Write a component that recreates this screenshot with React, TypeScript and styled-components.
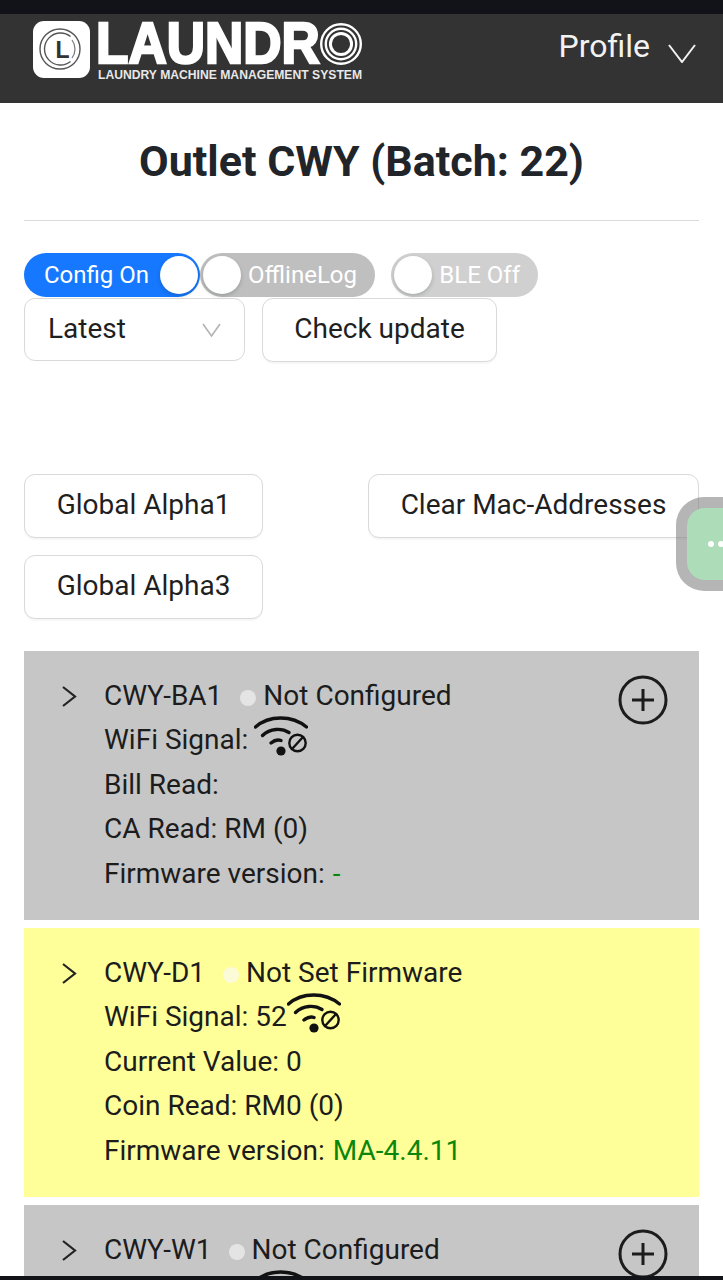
import styled, { createGlobalStyle } from "styled-components";

const GlobalStyle = createGlobalStyle`
  html, body {
    margin: 0;
    padding: 0;
    height: 1280px;
    overflow: hidden;
    background: #fff;
    font-family: Roboto, "Liberation Sans", sans-serif;
    color: #212529;
  }
  * { box-sizing: border-box; }
`;

const Page = styled.div`
  position: relative;
  width: 723px;
  height: 1280px;
  overflow: hidden;
`;

const StatusBar = styled.div`
  height: 14px;
  background: #111318;
`;

const Header = styled.header`
  height: 89px;
  background: #333333;
  display: flex;
  justify-content: space-between;
  padding: 7px 27px 0 32px;
`;

const Logo = styled.div`
  display: flex;
  gap: 8px;
  height: 58px;
`;

const LogoWords = styled.div`
  display: flex;
  flex-direction: column;
  width: 264px;
`;

const LogoTop = styled.div`
  display: flex;
  align-items: center;
  height: 43px;
  margin-top: 1px;
`;

const LogoName = styled.span`
  display: block;
  width: 222px;
  font-family: "Liberation Sans", sans-serif;
  font-weight: 700;
  font-size: 57px;
  line-height: 43px;
  color: #fff;
  -webkit-text-stroke: 2.5px #fff;
  transform: translateX(-2px) scaleX(0.93);
  transform-origin: left;
  white-space: nowrap;
`;

const LogoTag = styled.span`
  display: block;
  height: 13px;
  margin-top: 3px;
  font-family: "Liberation Sans", sans-serif;
  font-weight: 700;
  font-size: 13px;
  line-height: 13px;
  white-space: nowrap;
  color: #e8e8e8;
  transform: scaleX(0.935);
  transform-origin: left;
`;

const ProfileMenu = styled.div`
  display: flex;
  align-items: flex-start;
  gap: 18px;
  color: #f2f2f2;
  font-size: 32px;
  line-height: 36px;
  padding-top: 7px;
  svg { margin-top: 16px; }
`;

const Content = styled.main`
  padding: 0 24px;
`;

const Title = styled.h1`
  margin: 0;
  height: 118px;
  border-bottom: 1px solid #d9d9d9;
  padding-top: 32px;
  text-align: center;
  font-size: 43px;
  line-height: 52px;
  font-weight: 700;
  color: #212529;
  white-space: nowrap;
`;

const SwitchRow = styled.div`
  display: flex;
  margin-top: 32px;
  height: 44px;
`;

const Switch = styled.div<{ $on?: boolean; $bg: string; $w: number; $gap?: number }>`
  display: flex;
  flex-direction: ${(p) => (p.$on ? "row-reverse" : "row")};
  justify-content: space-between;
  align-items: center;
  width: ${(p) => p.$w}px;
  height: 44px;
  margin-left: ${(p) => p.$gap ?? 0}px;
  padding: 0 ${(p) => (p.$on ? 2 : 18)}px 0 ${(p) => (p.$on ? 20 : 3)}px;
  border-radius: 22px;
  background: ${(p) => p.$bg};
  color: #fff;
  font-size: 24px;
  white-space: nowrap;
`;

const Handle = styled.span`
  flex: none;
  width: 38px;
  height: 38px;
  border-radius: 50%;
  background: #fff;
  box-shadow: 0 2px 4px rgba(0, 35, 11, 0.2);
`;

const ControlRow = styled.div`
  display: flex;
  gap: 17px;
  margin-top: 1px;
`;

const Select = styled.div`
  width: 221px;
  height: 63px;
  display: flex;
  align-items: center;
  justify-content: space-between;
  padding: 0 23px 2px 23px;
  border: 1.5px solid #d9d9d9;
  border-radius: 11px;
  font-size: 28px;
  color: #1f1f1f;
  svg { margin-top: 2px; }
`;

const Button = styled.div<{ $w: number }>`
  width: ${(p) => p.$w}px;
  height: 64px;
  display: flex;
  align-items: center;
  justify-content: center;
  padding-bottom: 3px;
  border: 1.5px solid #d9d9d9;
  border-radius: 11px;
  box-shadow: 0 2px 0 rgba(0, 0, 0, 0.03);
  background: #fff;
  font-size: 28px;
  color: #1f1f1f;
  white-space: nowrap;
`;

const GlobalActions = styled.div`
  display: grid;
  grid-template-columns: 239px 331px;
  justify-content: space-between;
  gap: 17px 0;
  margin-top: 112px;
`;

const Cards = styled.div`
  display: flex;
  flex-direction: column;
  gap: 8px;
  margin-top: 32px;
`;

const Card = styled.section<{ $bg: string }>`
  position: relative;
  height: 269px;
  flex: none;
  padding: 23px 0 0 38px;
  background: ${(p) => p.$bg};
  display: flex;
  gap: 10px;
  font-size: 28px;
  line-height: 44.4px;
  color: #1c1c1c;
`;

const Expand = styled.div`
  width: 33px;
  height: 44px;
  margin-right: -1px;
  display: flex;
  align-items: center;
`;

const Lines = styled.div`
  display: flex;
  flex-direction: column;
`;

const Line = styled.div`
  display: flex;
  align-items: center;
  height: 44.4px;
  white-space: nowrap;
`;

const Dot = styled.span<{ $bg: string; $l: number; $r: number }>`
  width: 16px;
  height: 16px;
  border-radius: 50%;
  margin: 3px ${(p) => p.$r}px 0 ${(p) => p.$l}px;
  background: ${(p) => p.$bg};
`;

const Version = styled.span`
  color: #0a860a;
  margin-left: 8px;
`;

const AddButton = styled.svg`
  position: absolute;
  top: 24px;
  right: 31px;
`;

const WifiIcon = styled.svg<{ $shift: number }>`
  flex: none;
  margin: -10px 0 0 ${(p) => p.$shift}px;
`;

const FloatingBubble = styled.div`
  position: absolute;
  left: 676px;
  top: 497px;
  width: 90px;
  height: 94px;
  padding: 11px;
  border-radius: 28px;
  background: rgba(120, 120, 120, 0.55);
`;

const BubbleInner = styled.div`
  width: 100%;
  height: 100%;
  display: flex;
  align-items: center;
  gap: 4px;
  padding: 0 0 0 21px;
  border-radius: 18px;
  background: #acdcb8;
`;

const BubbleDot = styled.span`
  width: 6px;
  height: 6px;
  border-radius: 50%;
  background: #fff;
`;

const BottomBar = styled.div`
  position: absolute;
  left: 0;
  right: 0;
  bottom: 0;
  height: 4px;
  background: #111318;
`;

function LogoBadge() {
  return (
    <svg width="58" height="58" viewBox="0 0 58 58">
      <rect x="1" y="0" width="57" height="57" rx="11" fill="#fff" />
      <circle cx="28" cy="28" r="20" fill="none" stroke="#555" strokeWidth="1.4" />
      <path d="M38.5 15.5A16 16 0 1 0 38.5 40.5" fill="none" stroke="#555" strokeWidth="1.4" />
      <path d="M40 19a15 15 0 0 1 0 18" fill="none" stroke="#777" strokeWidth="1.2" />
      <text x="23.5" y="37" fontFamily="Liberation Sans" fontWeight="700" fontSize="23" fill="#333">L</text>
    </svg>
  );
}

function LogoRing() {
  return (
    <svg width="42" height="42" viewBox="0 0 42 42" style={{ flex: "none" }}>
      <circle cx="21" cy="21" r="19.8" fill="none" stroke="#fff" strokeWidth="2.4" />
      <circle cx="21" cy="21" r="15.2" fill="none" stroke="#fff" strokeWidth="2.4" />
      <circle cx="21" cy="21" r="10.6" fill="none" stroke="#fff" strokeWidth="3" />
    </svg>
  );
}

function Chevron({ w, h, color, weight }: { w: number; h: number; color: string; weight: number }) {
  return (
    <svg width={w} height={h} viewBox={`0 0 ${w} ${h}`} fill="none" stroke={color} strokeWidth={weight} style={{ flex: "none" }}>
      <path d={`M1 1L${w / 2} ${h - 1}L${w - 1} 1`} />
    </svg>
  );
}

function CardArrow() {
  return (
    <svg width="15" height="21" viewBox="0 0 15 21" fill="none" stroke="#222" strokeWidth="2.2">
      <path d="M1 1l12 9.5L1 20" />
    </svg>
  );
}

function Wifi({ shift }: { shift: number }) {
  return (
    <WifiIcon $shift={shift} width="54" height="40" viewBox="0 0 54 40" fill="none" stroke="#111" strokeLinecap="round">
      <path d="M1.5 11C15 -1 38 -1 52.5 11" strokeWidth="3.4" />
      <path d="M8.5 19.5C16 12 28 12 35 16.5" strokeWidth="3.4" />
      <path d="M17 27c3-2.5 7-3.5 10-2.5" strokeWidth="3.4" />
      <circle cx="27" cy="35" r="4.6" fill="#111" stroke="none" />
      <circle cx="43.5" cy="27" r="8.2" strokeWidth="2.4" />
      <path d="M38 33l11-12" strokeWidth="2.4" />
    </WifiIcon>
  );
}

function Plus() {
  return (
    <AddButton width="50" height="50" viewBox="0 0 50 50" fill="none" stroke="#1c1c1c" strokeWidth="3">
      <circle cx="25" cy="25" r="23" />
      <path d="M25 14v22M14 25h22" />
    </AddButton>
  );
}

export default function App() {
  return (
    <Page>
      <GlobalStyle />
      <StatusBar />
      <Header>
        <Logo>
          <LogoBadge />
          <LogoWords>
            <LogoTop>
              <LogoName>LAUNDR</LogoName>
              <LogoRing />
            </LogoTop>
            <LogoTag>LAUNDRY MACHINE MANAGEMENT SYSTEM</LogoTag>
          </LogoWords>
        </Logo>
        <ProfileMenu>
          Profile
          <Chevron w={28} h={19} color="#f2f2f2" weight={2} />
        </ProfileMenu>
      </Header>
      <Content>
        <Title>Outlet CWY (Batch: 22)</Title>
        <SwitchRow>
          <Switch $on $bg="#1677ff" $w={176}>
            <Handle />
            Config On
          </Switch>
          <Switch $bg="#bfbfbf" $w={175}>
            <Handle />
            OfflineLog
          </Switch>
          <Switch $bg="#d0d0d0" $w={147} $gap={16}>
            <Handle />
            BLE Off
          </Switch>
        </SwitchRow>
        <ControlRow>
          <Select>
            Latest
            <Chevron w={19} h={14} color="#b3b3b3" weight={1.6} />
          </Select>
          <Button $w={235}>Check update</Button>
        </ControlRow>
        <GlobalActions>
          <Button $w={239}>Global Alpha1</Button>
          <Button $w={331}>Clear Mac-Addresses</Button>
          <Button $w={239}>Global Alpha3</Button>
        </GlobalActions>
        <Cards>
          <Card $bg="#c6c6c6">
            <Expand><CardArrow /></Expand>
            <Lines>
              <Line>CWY-BA1<Dot $bg="#e4e4e4" $l={18} $r={7} />Not Configured</Line>
              <Line>WiFi Signal:<Wifi shift={6} /></Line>
              <Line>Bill Read:</Line>
              <Line>CA Read: RM (0)</Line>
              <Line>Firmware version:<Version>-</Version></Line>
            </Lines>
            <Plus />
          </Card>
          <Card $bg="#ffff99">
            <Expand><CardArrow /></Expand>
            <Lines>
              <Line>CWY-D1<Dot $bg="#fbfbd8" $l={18} $r={7} />Not Set Firmware</Line>
              <Line>WiFi Signal: 52<Wifi shift={0} /></Line>
              <Line>Current Value: 0</Line>
              <Line>Coin Read: RM0 (0)</Line>
              <Line>Firmware version:<Version>MA-4.4.11</Version></Line>
            </Lines>
          </Card>
          <Card $bg="#c6c6c6">
            <Expand><CardArrow /></Expand>
            <Lines>
              <Line>CWY-W1<Dot $bg="#e4e4e4" $l={17} $r={7} />Not Configured</Line>
              <Line>WiFi Signal:<Wifi shift={6} /></Line>
            </Lines>
            <Plus />
          </Card>
        </Cards>
      </Content>
      <FloatingBubble>
        <BubbleInner>
          <BubbleDot />
          <BubbleDot />
        </BubbleInner>
      </FloatingBubble>
      <BottomBar />
    </Page>
  );
}
